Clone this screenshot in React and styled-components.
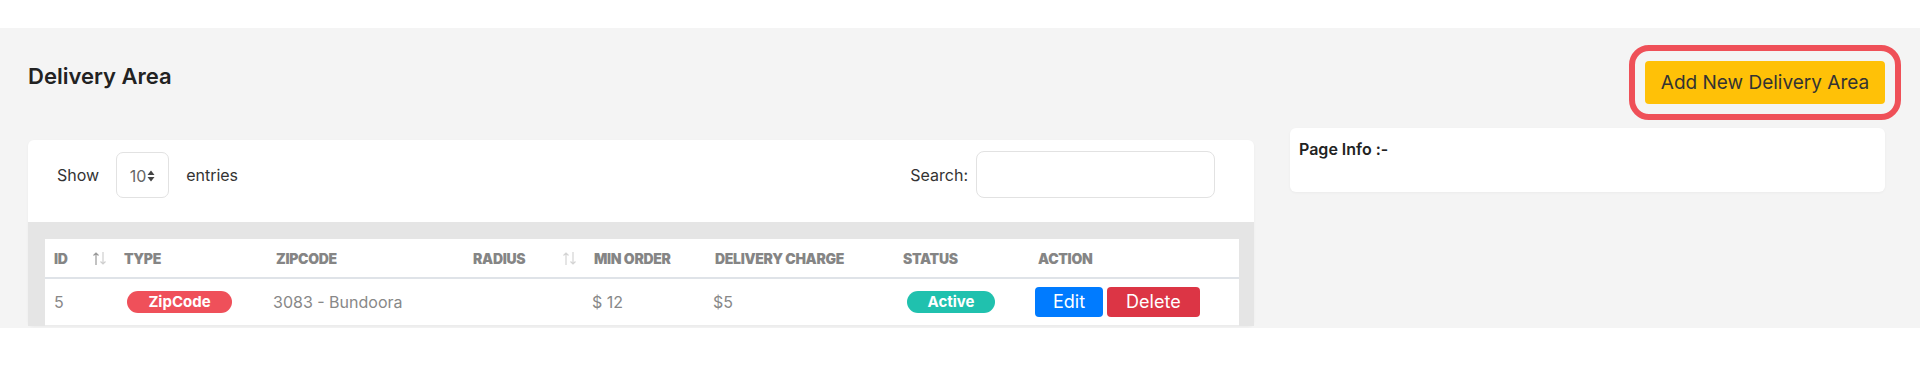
import styled, { createGlobalStyle } from "styled-components";

const GlobalStyle = createGlobalStyle`
  body {
    margin: 0;
    background: #ffffff;
    font-family: "Inter", "Noto Sans", sans-serif;
  }
`;

const Page = styled.div`
  width: 1920px;
  height: 374px;
  padding-top: 28px;
  box-sizing: border-box;
  background: #ffffff;
`;

const Section = styled.section`
  height: 300px;
  overflow: hidden;
  background: #f4f4f4;
  padding: 0 35px 0 28px;
  display: grid;
  grid-template-columns: 1226px 1fr;
  column-gap: 36px;
`;

const MainCol = styled.div`
  display: flex;
  flex-direction: column;
`;

const SideCol = styled.div`
  display: flex;
  flex-direction: column;
  align-items: flex-end;
`;

const Title = styled.h1`
  margin: 35px 0 0;
  font-size: 22px;
  line-height: 26px;
  font-weight: 600;
  color: #222;
`;

const Card = styled.div`
  background: #fff;
  border-radius: 6px;
  box-shadow: 0 1px 3px rgba(0, 0, 0, 0.04);
`;

const TableCard = styled(Card)`
  margin-top: 51px;
`;

const Toolbar = styled.div`
  display: flex;
  justify-content: space-between;
  align-items: center;
  padding: 11px 39px 0 29px;
  height: 47px;
`;

const ToolGroup = styled.div`
  display: flex;
  align-items: center;
  gap: ${(p) => p.gap || 17}px;
  font-size: 16px;
  color: #333;
`;

const SelectBox = styled.div`
  width: 53px;
  height: 46px;
  box-sizing: border-box;
  border: 1px solid #e2e2e2;
  border-radius: 7px;
  display: flex;
  align-items: center;
  justify-content: center;
  gap: 1px;
  padding-top: 3px;
  font-size: 16px;
  color: #666;
`;

const SearchInput = styled.input`
  width: 239px;
  height: 47px;
  box-sizing: border-box;
  border: 1px solid #e2e2e2;
  border-radius: 8px;
  outline: none;
`;

const TableWrap = styled.div`
  margin-top: 24px;
  background: #e5e5e5;
  padding: 17px 15px 0 17px;
`;

const Table = styled.table`
  width: 1194px;
  border-collapse: collapse;
  table-layout: fixed;
  background: #fff;
`;

const Th = styled.th`
  box-sizing: border-box;
  width: ${(p) => p.w}px;
  height: 39px;
  padding: 0 8px 0 9px;
  text-align: left;
  font-size: 14px;
  font-weight: 900;
  letter-spacing: -0.3px;
  text-transform: uppercase;
  color: #858585;
  border-bottom: 2px solid #dfe3e8;
`;

const ThInner = styled.div`
  display: flex;
  align-items: center;
  justify-content: space-between;
`;

const Td = styled.td`
  box-sizing: border-box;
  height: 47px;
  padding: 0 4px 0 ${(p) => p.pl || 9}px;
  font-size: 16px;
  color: #888;
  border-bottom: 1px solid #ececec;
  white-space: nowrap;
`;

const Pill = styled.span`
  display: inline-flex;
  align-items: center;
  justify-content: center;
  width: ${(p) => p.w}px;
  height: 22px;
  border-radius: 11px;
  background: ${(p) => p.bg};
  color: #fff;
  font-size: 15px;
  font-weight: 700;
`;

const ActionButton = styled.button`
  height: 30px;
  padding: 0 ${(p) => p.px}px;
  margin-right: 4px;
  border: none;
  border-radius: 4px;
  background: ${(p) => p.bg};
  color: #fff;
  font-family: inherit;
  font-size: 18px;
`;

const AddButton = styled.button`
  margin-top: 33px;
  height: 43px;
  width: 240px;
  border: none;
  border-radius: 4px;
  background: #ffc107;
  color: #333;
  font-family: inherit;
  font-size: 19px;
  outline: 6px solid #ef5058;
  outline-offset: 10px;
`;

const InfoCard = styled(Card)`
  align-self: stretch;
  margin-top: 24px;
  height: 64px;
  box-sizing: border-box;
  padding: 11px 9px;
  font-size: 16px;
  font-weight: 600;
  color: #222;
`;

const SortIcon = ({ up = "#d4d4d4", down = "#d4d4d4" }) => (
  <svg width="15" height="15" viewBox="0 0 15 15" fill="none" strokeWidth="1.2">
    <path d="M4 14V2M1.5 4.5L4 2l2.5 2.5" stroke={up} />
    <path d="M11 1v12M8.5 10.5L11 13l2.5-2.5" stroke={down} />
  </svg>
);

const Caret = () => (
  <svg width="8" height="12" viewBox="0 0 8 12">
    <path d="M4 0.5L7.5 5H0.5z M0.5 7H7.5L4 11.5z" fill="#444" />
  </svg>
);

const columns = [
  { label: "ID", w: 70, sort: { up: "#9a9a9a", down: "#cfcfcf" } },
  { label: "Type", w: 152 },
  { label: "Zipcode", w: 197 },
  { label: "Radius", w: 121, sort: {} },
  { label: "Min Order", w: 121 },
  { label: "Delivery Charge", w: 188 },
  { label: "Status", w: 135 },
  { label: "Action", w: 210 },
];

export default function App() {
  return (
    <>
      <GlobalStyle />
      <Page>
        <Section>
          <MainCol>
            <Title>Delivery Area</Title>
            <TableCard>
              <Toolbar>
                <ToolGroup>
                  Show
                  <SelectBox>
                    10
                    <Caret />
                  </SelectBox>
                  entries
                </ToolGroup>
                <ToolGroup gap={8}>
                  Search:
                  <SearchInput />
                </ToolGroup>
              </Toolbar>
              <TableWrap>
                <Table>
                  <thead>
                    <tr>
                      {columns.map((c) => (
                        <Th key={c.label} w={c.w}>
                          <ThInner>
                            {c.label}
                            {c.sort && <SortIcon {...c.sort} />}
                          </ThInner>
                        </Th>
                      ))}
                    </tr>
                  </thead>
                  <tbody>
                    <tr>
                      <Td>5</Td>
                      <Td pl={12}>
                        <Pill w={105} bg="#ef505a">ZipCode</Pill>
                      </Td>
                      <Td pl={6}>3083 - Bundoora</Td>
                      <Td></Td>
                      <Td pl={7}>$ 12</Td>
                      <Td pl={7}>$5</Td>
                      <Td pl={13}>
                        <Pill w={88} bg="#20c1ae">Active</Pill>
                      </Td>
                      <Td pl={6}>
                        <ActionButton bg="#007bff" px={18}>Edit</ActionButton>
                        <ActionButton bg="#dc3545" px={19}>Delete</ActionButton>
                      </Td>
                    </tr>
                  </tbody>
                </Table>
              </TableWrap>
            </TableCard>
          </MainCol>
          <SideCol>
            <AddButton>Add New Delivery Area</AddButton>
            <InfoCard>Page Info :-</InfoCard>
          </SideCol>
        </Section>
      </Page>
    </>
  );
}
